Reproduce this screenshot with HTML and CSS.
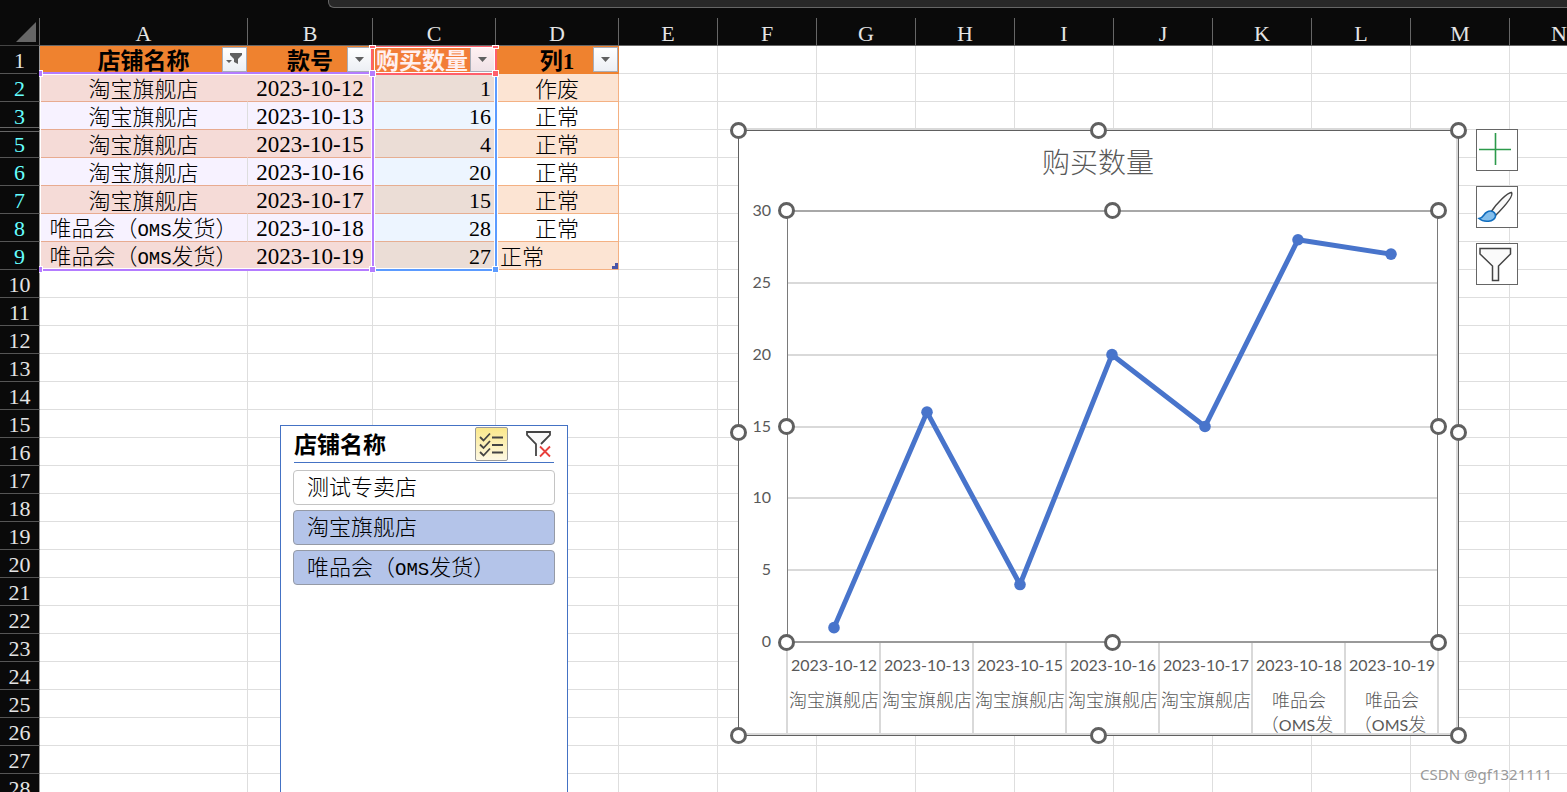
FILE: index.html
```html
<!DOCTYPE html>
<html lang="zh-CN">
<head>
<meta charset="utf-8">
<title>购买数量</title>
<link rel="stylesheet" href="styles.css">
</head>
<body>
<main class="app">
  <div class="ribbon"><div class="formula-bar"></div></div>
  <div class="sheet">
    <table class="grid">
      <colgroup>
        <col class="col-index"><col class="col-a"><col class="col-b"><col class="col-c"><col class="col-c">
        <col class="col-std"><col class="col-std"><col class="col-std"><col class="col-std"><col class="col-std">
        <col class="col-std"><col class="col-std"><col class="col-std"><col class="col-std"><col class="col-std">
      </colgroup>
      <thead><tr id="letters"></tr></thead>
      <tbody id="rows"></tbody>
    </table>
  </div>

  <svg class="ranges" width="640" height="290" viewBox="0 0 640 290" aria-hidden="true">
    <g fill="#fff">
      <rect x="40" y="74" width="332" height="1"/><rect x="40" y="268" width="455" height="1"/>
      <rect x="40" y="74" width="1" height="195"/><rect x="371" y="74" width="1" height="195"/>
      <rect x="374" y="76" width="1" height="193"/><rect x="494" y="76" width="1" height="193"/>
      <rect x="374" y="72" width="121" height="1"/><rect x="374" y="47" width="121" height="1"/>
      <rect x="374" y="47" width="1" height="26"/><rect x="494" y="47" width="1" height="26"/>
      <rect x="497" y="74" width="1" height="195"/>
    </g>
    <g fill="#ff5f6b">
      <rect x="371" y="46" width="2" height="27"/><rect x="495" y="46" width="2" height="27"/>
      <rect x="372" y="73" width="124" height="2"/><rect x="372" y="46" width="124" height="1"/>
    </g>
    <g fill="#5b9bff"><rect x="495" y="75" width="2" height="195"/><rect x="373" y="269" width="123" height="2"/></g>
    <g fill="#b47cff"><rect x="40" y="72" width="333" height="2"/><rect x="372" y="72" width="2" height="198"/><rect x="40" y="269" width="333" height="2"/></g>
    <g stroke="#fff" stroke-width="1">
      <rect x="369.500" y="70.500" width="6" height="6" fill="#b47cff"/><rect x="369.500" y="266.500" width="6" height="6" fill="#b47cff"/>
      <rect x="37.500" y="70.500" width="5" height="6" fill="#b47cff"/><rect x="37.500" y="266.500" width="5" height="6" fill="#b47cff"/>
      <rect x="492.500" y="70.500" width="6" height="6" fill="#ff5f6b"/><rect x="492.500" y="266.500" width="6" height="6" fill="#5b9bff"/>
      <rect x="369.500" y="45.500" width="6" height="3" fill="#ff5f6b"/><rect x="492.500" y="45.500" width="6" height="3" fill="#ff5f6b"/>
    </g>
    <rect x="37" y="64" width="2" height="20" fill="#0a0a0a"/><rect x="37" y="260" width="2" height="20" fill="#0a0a0a"/>
    <path d="M615 263h3v6h-6v-3h3z" fill="#4a56a8"/>
  </svg>

  <section class="slicer">
    <header class="slicer-head">
      <h2 class="slicer-title">店铺名称</h2>
      <button class="multi" aria-label="多选">
        <svg width="25" height="25" viewBox="0 0 25 25" fill="none" stroke="#444" stroke-width="1.800"><path d="M1 5l3.500 3.500L11 1.500M1 12.500L4.500 16 11 9M1 20l3.500 3.500L11 16.500"/><path d="M13 5.500h11M13 13h11M13 20.500h11"/></svg>
      </button>
      <button class="clear" aria-label="清除筛选器">
        <svg width="27" height="28" viewBox="0 0 27 28" fill="none"><path d="M11 26V14L2 5V2H25V5L16 14" stroke="#444" stroke-width="1.800" fill="#fafafa"/><path d="M15 16.500l10 10M25 16.500l-10 10" stroke="#e8403c" stroke-width="1.800"/></svg>
      </button>
    </header>
    <button class="item">测试专卖店</button>
    <button class="item item-on">淘宝旗舰店</button>
    <button class="item item-on">唯品会（<span class="half">OMS</span>发货）</button>
  </section>

  <svg class="chart" id="chart" width="740" height="626" viewBox="728 120 740 626" role="img" aria-label="购买数量">
    <rect x="738" y="130" width="720" height="605" fill="#fff"/>
    <path d="M738 129h719v606M738 734h720" fill="none" stroke="#d9d9d9" stroke-width="2"/>
    <path d="M738.500 130.500h720v605h-720z" fill="none" stroke="#606060"/>
    <text class="chart-title" x="1098" y="173">购买数量</text>
    <g id="plot"></g>
  </svg>

  <nav class="chart-tools">
    <button class="tool" aria-label="图表元素"><svg width="40" height="40" viewBox="0 0 40 40"><path d="M2 19.500h32M18.500 3v32" stroke="#2c9a4b" stroke-width="1.600"/></svg></button>
    <button class="tool" aria-label="图表样式"><svg width="40" height="40" viewBox="0 0 40 40"><path d="M14 25C19 17 31 5 34.500 5.500C37 9 25 22 18 29Z" fill="#fafafa" stroke="#444" stroke-width="1.500"/><path d="M2 31.500C7 31 6 27 10 25C14 22.500 19 25 18.500 29.500C17 35 7 36 2 31.500Z" fill="#83beec" stroke="#0f6cbd" stroke-width="1.500"/></svg></button>
    <button class="tool" aria-label="图表筛选器"><svg width="40" height="40" viewBox="0 0 40 40"><path d="M3 4.500H33.500V10L21.500 22V36.500H15.500V22L3 10Z" fill="#fafafa" stroke="#444" stroke-width="1.500"/></svg></button>
  </nav>

  <div class="watermark">CSDN @gf1321111</div>
</main>
<script src="script.js"></script>
</body>
</html>
```

FILE: styles.css
```css
* { box-sizing: border-box; }
body {
  margin: 0;
  overflow: hidden;
  background: #fff;
  font-family: "Liberation Serif", "Noto Sans CJK SC", serif;
  font-size: 22px;
  font-weight: 300;
  color: #000;
}
button { font: inherit; color: inherit; padding: 0; margin: 0; }
.app { position: relative; height: 100vh; overflow: hidden; }

.ribbon { display: flex; height: 18px; padding-left: 328px; background: #0a0a0a; }
.formula-bar {
  flex: 1;
  height: 8px;
  background: #282828;
  border: 1px solid #666;
  border-width: 0 0 1px 1px;
  border-bottom-left-radius: 6px;
}

.grid { table-layout: fixed; width: 0; border-collapse: separate; border-spacing: 0; }
.col-index { width: 40px; }
.col-a { width: 208px; }
.col-b { width: 125px; }
.col-c { width: 123px; }
.col-std { width: 99px; }
.grid tr { height: 28px; }
.grid th, .grid td {
  height: 28px;
  padding: 3px 0 0;
  border-right: 1px solid #dedede;
  border-bottom: 1px solid #dedede;
  line-height: 22px;
  white-space: nowrap;
  overflow: hidden;
}
.grid thead th {
  padding-top: 4px;
  font-weight: 400;
  color: #e4e4e4;
  background: #0a0a0a;
  border-color: #666;
}
.grid .corner { padding: 0 3px 3px 16px; border-bottom-color: #444; vertical-align: bottom; }
.corner svg { display: block; }
.grid tbody th {
  font-weight: 400;
  color: #e4e4e4;
  background: #0a0a0a;
  border-right-color: #999;
  border-bottom-color: #555;
}
.grid tbody .picked { color: #6ff; }
.grid tbody .fold-above { border-bottom-color: #0a0a0a; background: linear-gradient(#0a0a0a 25px, #666 25px, #666 26px, #0a0a0a 26px); }
.grid tbody .fold-below { background: linear-gradient(#0a0a0a 1px, #666 1px, #666 2px, #0a0a0a 2px); }

.grid .field { position: relative; padding-top: 5px; text-align: center; font-size: 23px; font-weight: 700; background: #ef822f; border-color: #ef822f; }
.grid .field-value { padding-left: 3px; text-align: left; color: #fff0f0; background: #f27d38; }
.filter {
  position: absolute;
  top: 1px;
  right: 0;
  display: grid;
  place-items: center;
  width: 25px;
  height: 25px;
  border: 1px solid #a8adb8;
  background: linear-gradient(#fff, #eceff4);
}
.field-value .filter { background: linear-gradient(#fff0f2, #efe2e6); }

.grid .store, .grid .date, .grid .state { text-align: center; }
.grid .date { font-size: 23px; }
.grid .store, .grid .state { padding-top: 4px; }
.grid .store, .grid .date { background: #f7f2ff; border-bottom-color: #e8ab90; }
.grid .qty { padding-right: 4px; text-align: right; background: #edf5ff; border-bottom-color: #e6ae92; }
.grid .state { border-color: #f4b183; }
.grid .band .store, .grid .band .date { background: #f5dbd7; }
.grid .band .store { border-right-color: #f5dbd7; }
.grid .band .qty { background: #ebddd6; }
.grid .band .state { background: #fce4d3; }
.grid .state-left { padding-left: 4px; text-align: left; }
.half { font-family: "Liberation Mono", monospace; font-size: 19px; line-height: 1; }

.ranges { position: absolute; left: 0; top: 0; }

.slicer {
  position: absolute;
  left: 280px;
  top: 425px;
  bottom: 0;
  width: 288px;
  display: flex;
  flex-direction: column;
  gap: 5px;
  padding: 0 12px;
  background: #fff;
  border: 1px solid #4472c4;
  border-bottom: 0;
}
.slicer-head {
  display: flex;
  align-items: center;
  height: 37px;
  margin: 0 1px 2px 1px;
  border-bottom: 1px solid #4472c4;
}
.slicer-title { flex: 1; margin: 0; padding-top: 3px; font-size: 23px; font-weight: 700; line-height: 33px; }
.multi {
  display: grid;
  place-items: center;
  width: 33px;
  height: 34px;
  margin-right: 17px;
  border: 1px solid #999;
  border-radius: 2px;
  background: linear-gradient(#fbe88a, #fdf8e4);
}
.clear { display: grid; border: 0; background: none; margin-right: 2px; }
.item {
  height: 35px;
  padding: 0 13px;
  border: 1px solid #c4c4c4;
  border-radius: 4px;
  background: #fff;
  line-height: 31px;
  text-align: left;
}
.item-on { background: #b4c4e9; border-color: #959aa6; }

.chart { position: absolute; left: 728px; top: 120px; }
.chart text { fill: #595959; text-anchor: middle; font-family: Lato, "Noto Sans CJK SC", sans-serif; font-size: 16px; font-weight: 400; }
.chart .chart-title { font-size: 28px; font-weight: 300; }
.chart .shop { font-size: 18px; font-weight: 300; }
.chart .latin { font-size: 16px; font-weight: 400; }
.chart .tick { text-anchor: end; }

.chart-tools { position: absolute; left: 1476px; top: 129px; display: grid; gap: 15px; }
.tool { display: grid; width: 42px; height: 42px; border: 1px solid #666; background: #fff; }

.watermark {
  position: absolute;
  right: 15px;
  bottom: 7px;
  font: 400 15px/22px "Noto Sans", sans-serif;
  color: #999;
}
```

FILE: script.js
```js
const letters = 'ABCDEFGHIJKLMN'.split('');
const data = [
  [2, '淘宝旗舰店', '2023-10-12', 1, '作废'],
  [3, '淘宝旗舰店', '2023-10-13', 16, '正常'],
  [5, '淘宝旗舰店', '2023-10-15', 4, '正常'],
  [6, '淘宝旗舰店', '2023-10-16', 20, '正常'],
  [7, '淘宝旗舰店', '2023-10-17', 15, '正常'],
  [8, '唯品会（<span class="half">OMS</span>发货）', '2023-10-18', 28, '正常'],
  [9, '唯品会（<span class="half">OMS</span>发货）', '2023-10-19', 27, '正常']
];

const arrow = '<svg width="11" height="6" viewBox="0 0 11 6"><path d="M1 0h9L5.5 5z" fill="#606060"/></svg>';
const funnel = '<svg width="19" height="15" viewBox="0 0 19 15"><path d="M5 1h12v2l-4 4v5l-4-2V7L5 3zM1 8h6L4 11z" fill="#606060"/></svg>';
const blank = n => '<td></td>'.repeat(n);
const field = (name, icon, extra = '') =>
  `<td class="field ${extra}">${name}<button class="filter" aria-label="筛选 ${name}">${icon}</button></td>`;

document.getElementById('letters').innerHTML =
  '<th class="corner"><svg width="20" height="20" viewBox="0 0 20 20"><path d="M20 0v20H0z" fill="#666"/></svg></th>' +
  letters.map(l => `<th scope="col">${l}</th>`).join('');

let html = '<tr><th scope="row">1</th>' + field('店铺名称', funnel) + field('款号', arrow) +
  field('购买数量', arrow, 'field-value') + field('列1', arrow) + blank(10) + '</tr>';
data.forEach(([n, store, date, qty, state], i) => {
  const fold = n === 3 ? 'fold-above' : n === 5 ? 'fold-below' : '';
  html += `<tr class="${i % 2 ? '' : 'band'}"><th scope="row" class="picked ${fold}">${n}</th>` +
    `<td class="store">${store}</td><td class="date">${date}</td><td class="qty">${qty}</td>` +
    `<td class="state ${n === 9 ? 'state-left' : ''}">${state}</td>${blank(10)}</tr>`;
});
for (let n = 10; n <= 28; n++) html += `<tr><th scope="row">${n}</th>${blank(14)}</tr>`;
document.getElementById('rows').innerHTML = html;

const left = 787, right = 1438, ceiling = 211, base = 642, step = 93;
const y = v => base - v * (base - ceiling) / 30;
let out = '';
for (let v = 0; v <= 30; v += 5) {
  out += `<text class="tick" x="771" y="${Math.round(y(v)) + 5}">${v}</text>`;
  if (v > 0 && v < 30) out += `<path d="M${left} ${Math.round(y(v))}H${right}" stroke="#d9d9d9" stroke-width="2"/>`;
}
for (let i = 0; i <= 7; i++) {
  out += `<path d="M${left + i * step} ${base}V733" stroke="#d9d9d9" stroke-width="2"/>`;
}
out += `<path d="M${left} ${ceiling}H${right}" stroke="#a8a8a8" stroke-width="2"/><path d="M${left} ${base}H${right}" stroke="#999" stroke-width="2"/>` +
  `<path d="M787.5 ${ceiling}V${base}M1437.5 ${ceiling}V${base}" stroke="#7a7a7a"/>`;
const pts = data.map((d, i) => [left + 47 + i * step - (i > 2 ? 1 : 0), y(d[3])]);
out += `<polyline points="${pts.map(p => p.join()).join(' ')}" fill="none" stroke="#4874cb" stroke-width="5" stroke-linejoin="round"/>`;
pts.forEach(p => { out += `<circle cx="${p[0]}" cy="${p[1]}" r="5.8" fill="#4874cb"/>`; });
data.forEach((d, i) => {
  const x = left + 47 + i * step;
  out += `<text x="${x}" y="671">${d[2]}</text>`;
  out += d[0] < 8
    ? `<text class="shop" x="${x}" y="707">${d[1]}</text>`
    : `<text class="shop" x="${x}" y="707">唯品会</text><text class="shop" x="${x - 2}" y="731">（<tspan class="latin">OMS</tspan>发</text>`;
});
[[738, 130], [1098, 130], [1458, 130], [738, 432], [1458, 432], [738, 735], [1098, 735], [1458, 735],
 [786, 210], [1112, 210], [1438, 210], [786, 426], [1438, 426], [786, 642], [1112, 642], [1438, 642]]
  .forEach(([cx, cy]) => { out += `<circle cx="${cx + 0.5}" cy="${cy + 0.5}" r="7" fill="#fff" stroke="#606060" stroke-width="3"/>`; });
document.getElementById('plot').innerHTML = out;
```
